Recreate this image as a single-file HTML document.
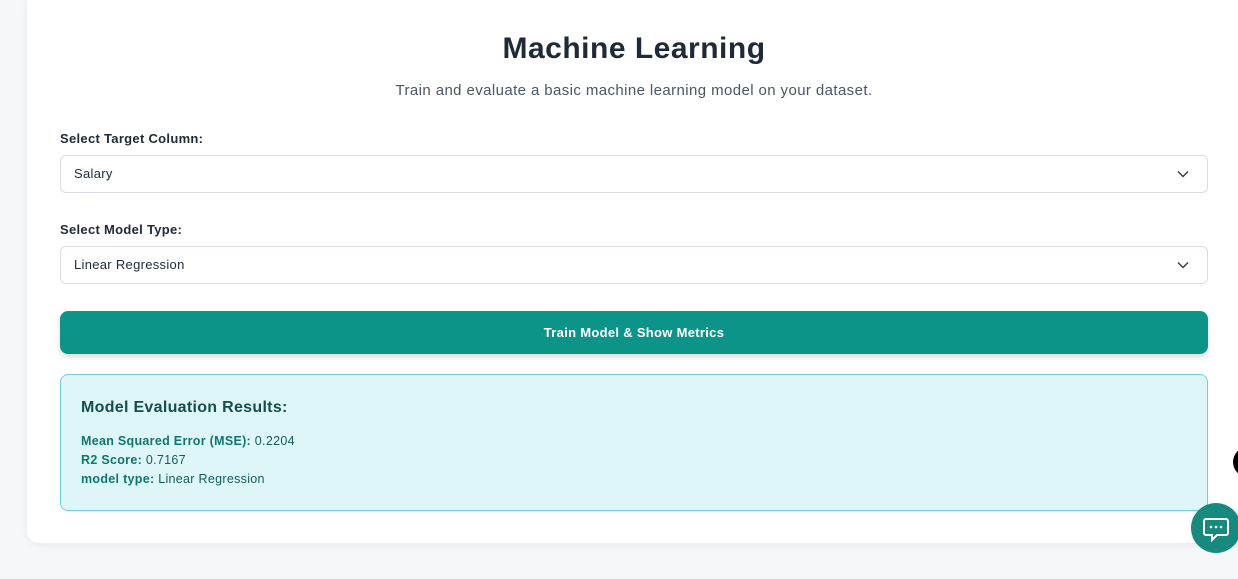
<!DOCTYPE html>
<html><head><meta charset="utf-8"><style>
*{box-sizing:border-box;margin:0;padding:0}
body{width:1238px;height:579px;overflow:hidden;background:#f6f7f9;font-family:"Liberation Sans",sans-serif;position:relative}
.card{position:absolute;left:27px;top:-10px;width:1240px;height:553px;background:#fff;border-radius:12px;box-shadow:0 2px 8px rgba(0,0,0,.06)}
h1{position:absolute;left:0;width:1268px;top:32px;text-align:center;font-size:30px;font-weight:bold;color:#1f2937;letter-spacing:0.5px}
.sub{position:absolute;left:0;width:1268px;top:82px;text-align:center;font-size:15px;color:#4b5563;letter-spacing:0.4px}
.lbl{position:absolute;left:60px;font-size:13px;font-weight:bold;color:#1f2937;letter-spacing:0.3px}
.sel{position:absolute;left:60px;width:1148px;height:38px;border:1px solid #d9dde3;border-radius:6px;font-size:13px;color:#1f2937;padding:10px 13px;letter-spacing:0.3px}
.sel svg{position:absolute;right:18px;top:14px}
.btn{position:absolute;left:60px;top:311px;width:1148px;height:43px;background:#0d9488;border-radius:8px;color:#fff;font-weight:bold;font-size:13px;text-align:center;line-height:43px;box-shadow:0 3px 6px rgba(0,0,0,.15);letter-spacing:0.3px}
.res{position:absolute;left:60px;top:374px;width:1148px;height:137px;background:#dff6f9;border:1px solid #67d3dd;border-radius:8px;color:#115e59}
.res h2{position:absolute;left:20px;top:24px;font-size:16px;font-weight:bold;color:#134e4a;letter-spacing:0.3px}
.res p{position:absolute;left:20px;font-size:12.5px;color:#115e59;letter-spacing:0.3px}
.res b{color:#0f766e}
.chat{position:absolute;left:1191px;top:503px;width:50px;height:50px;border-radius:50%;background:#168a7e}
.blk{position:absolute;left:1233px;top:447px;width:30px;height:30px;border-radius:50%;background:#000}
</style></head><body>
<div class="card"></div>
<h1>Machine Learning</h1>
<div class="sub">Train and evaluate a basic machine learning model on your dataset.</div>
<div class="lbl" style="top:131px">Select Target Column:</div>
<div class="sel" style="top:155px">Salary<svg width="12" height="8" viewBox="0 0 12 8"><path d="M1 1.5l5 5 5-5" fill="none" stroke="#374151" stroke-width="1.5"/></svg></div>
<div class="lbl" style="top:222px">Select Model Type:</div>
<div class="sel" style="top:246px">Linear Regression<svg width="12" height="8" viewBox="0 0 12 8"><path d="M1 1.5l5 5 5-5" fill="none" stroke="#374151" stroke-width="1.5"/></svg></div>
<div class="btn">Train Model &amp; Show Metrics</div>
<div class="res">
<h2>Model Evaluation Results:</h2>
<p style="top:59px"><b>Mean Squared Error (MSE):</b> 0.2204</p>
<p style="top:78px"><b>R2 Score:</b> 0.7167</p>
<p style="top:97px"><b>model type:</b> Linear Regression</p>
</div>
<div class="blk"></div>
<div class="chat"><svg width="50" height="50" viewBox="0 0 50 50"><path d="M15 16h20a2 2 0 0 1 2 2v12a2 2 0 0 1-2 2h-9l-5 5v-5h-6a2 2 0 0 1-2-2V18a2 2 0 0 1 2-2z" fill="none" stroke="#fff" stroke-width="2"/><circle cx="20" cy="24" r="1.3" fill="#fff"/><circle cx="25" cy="24" r="1.3" fill="#fff"/><circle cx="30" cy="24" r="1.3" fill="#fff"/></svg></div>
</body></html>
